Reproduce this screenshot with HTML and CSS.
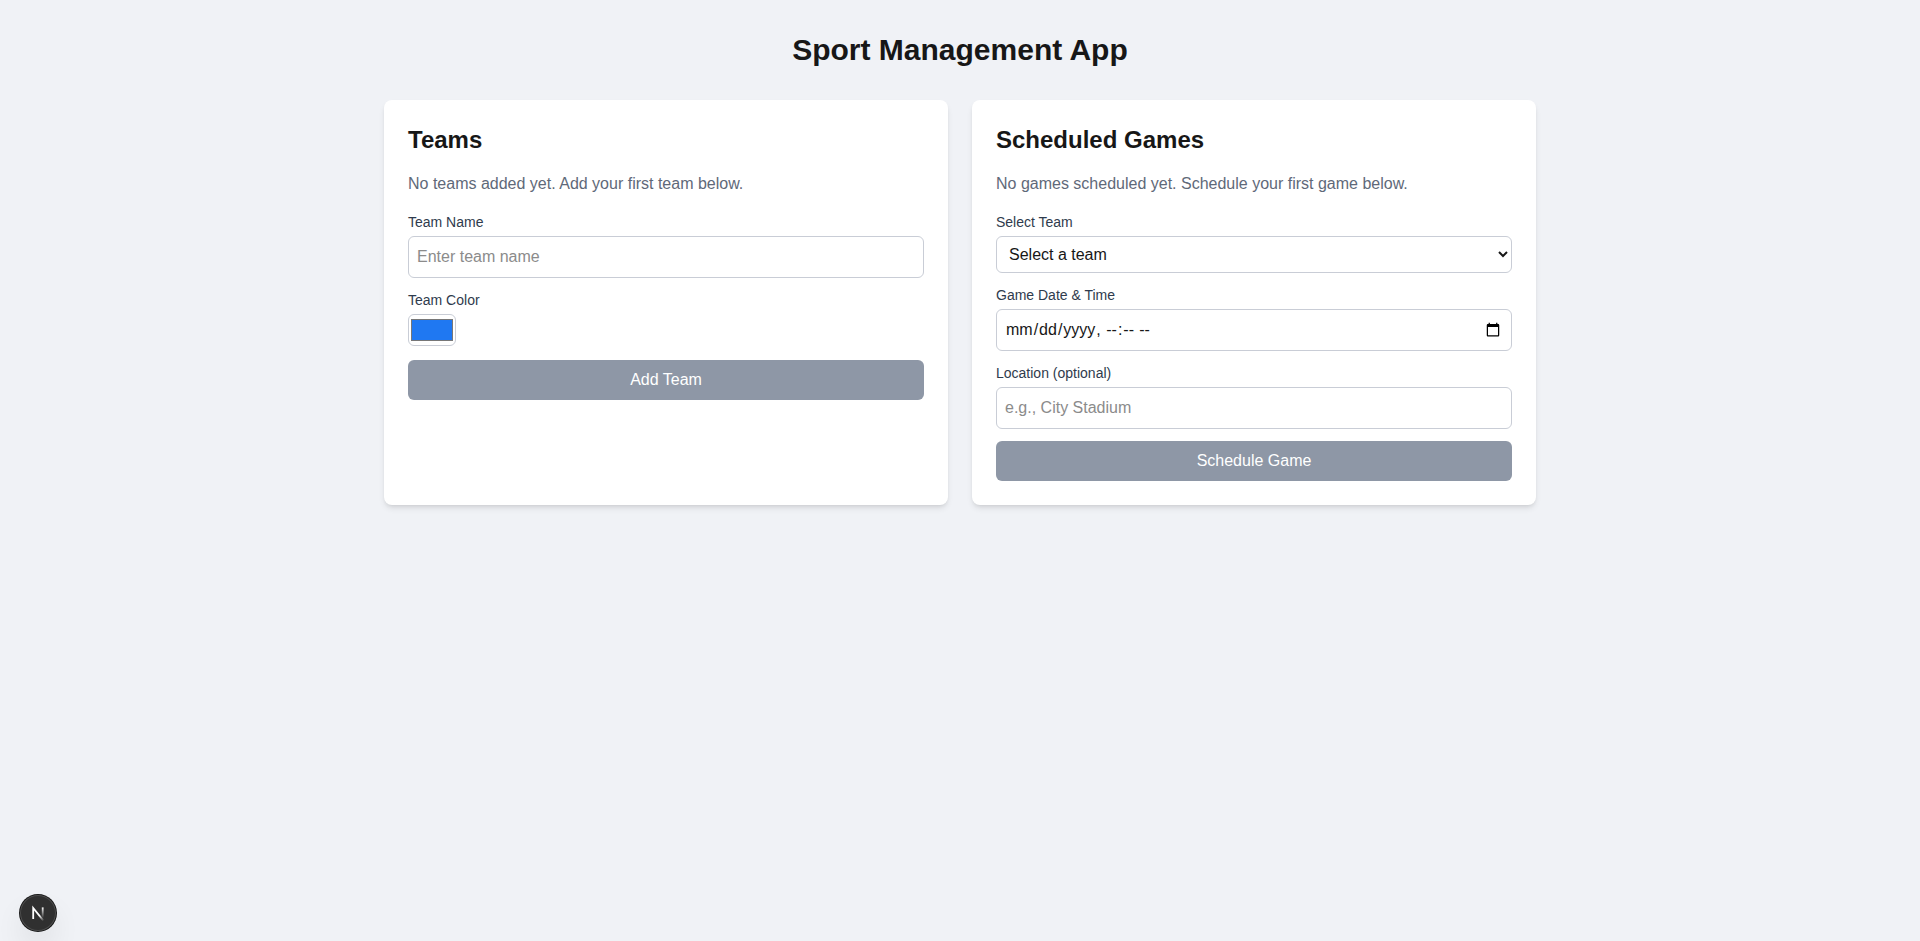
FILE: index.html
```html
<!DOCTYPE html>
<html lang="en">
<head>
<meta charset="utf-8">
<meta name="viewport" content="width=device-width, initial-scale=1">
<title>Sport Management App</title>
<link rel="stylesheet" href="styles.css">
</head>
<body>
<main class="page">
  <h1 class="page-title">Sport Management App</h1>
  <div class="columns">
    <section class="card">
      <h2 class="card-title">Teams</h2>
      <p class="empty">No teams added yet. Add your first team below.</p>
      <form class="form">
        <div>
          <label class="label" for="team-name">Team Name</label>
          <input class="field" id="team-name" type="text" placeholder="Enter team name">
        </div>
        <div class="color-row">
          <label class="label" for="team-color">Team Color</label>
          <input class="swatch" id="team-color" type="color" value="#1f78f2">
        </div>
        <button class="submit" type="submit" disabled>Add Team</button>
      </form>
    </section>
    <section class="card">
      <h2 class="card-title">Scheduled Games</h2>
      <p class="empty">No games scheduled yet. Schedule your first game below.</p>
      <form class="form">
        <div>
          <label class="label" for="game-team">Select Team</label>
          <select class="field select" id="game-team">
            <option>Select a team</option>
          </select>
        </div>
        <div>
          <label class="label" for="game-date">Game Date &amp; Time</label>
          <input class="field" id="game-date" type="datetime-local">
        </div>
        <div>
          <label class="label" for="game-location">Location (optional)</label>
          <input class="field" id="game-location" type="text" placeholder="e.g., City Stadium">
        </div>
        <button class="submit" type="submit" disabled>Schedule Game</button>
      </form>
    </section>
  </div>
</main>
<button class="dev-badge" type="button" aria-label="Open dev tools">
  <svg width="36" height="36" viewBox="0 0 36 36" fill="none" stroke-width="1.8">
    <defs>
      <linearGradient id="diagonal" x1="19.5" y1="20.5" x2="23.5" y2="26" gradientUnits="userSpaceOnUse">
        <stop stop-color="#fff"/>
        <stop offset="1" stop-color="#fff" stop-opacity="0"/>
      </linearGradient>
      <linearGradient id="stem" x1="22" y1="12" x2="22" y2="23" gradientUnits="userSpaceOnUse">
        <stop stop-color="#fff"/>
        <stop offset="1" stop-color="#fff" stop-opacity="0"/>
      </linearGradient>
    </defs>
    <path d="M23.4 25.6L13.2 13V23.9" stroke="url(#diagonal)"/>
    <path d="M22.7 12.4V23.9" stroke="url(#stem)"/>
  </svg>
</button>
</body>
</html>
```
FILE: styles.css
```css
*, *::before, *::after { box-sizing: border-box; }

body {
  margin: 0;
  min-height: 100vh;
  background: #f0f2f6;
  color: #171717;
  font-family: "Liberation Sans", Arial, Helvetica, sans-serif;
  font-size: 16px;
  line-height: 24px;
}

h1, h2, p { margin: 0; }

input, select, button { font: inherit; color: inherit; margin: 0; }

.page {
  max-width: 1216px;
  margin: 0 auto;
  padding: 32px;
}

.page-title {
  margin-bottom: 32px;
  font-size: 30px;
  line-height: 36px;
  font-weight: 700;
  text-align: center;
}

.columns {
  display: grid;
  grid-template-columns: repeat(2, minmax(0, 1fr));
  gap: 24px;
}

.card {
  padding: 24px;
  background: #fff;
  border-radius: 8px;
  box-shadow: 0 4px 6px -1px rgba(0, 0, 0, 0.1), 0 2px 4px -2px rgba(0, 0, 0, 0.1);
}

.card-title {
  margin-bottom: 16px;
  font-size: 24px;
  line-height: 32px;
  font-weight: 700;
}

.empty {
  margin-bottom: 16px;
  color: #5f6979;
}

.form {
  display: flex;
  flex-direction: column;
  gap: 12px;
}

.label {
  display: block;
  margin-bottom: 4px;
  font-size: 14px;
  line-height: 20px;
  color: #2f3b4d;
}

.field {
  display: block;
  width: 100%;
  height: 42px;
  padding: 8px;
  border: 1px solid #c9cdd6;
  border-radius: 6px;
  background: #fff;
}

.field::placeholder { color: #8b8b8b; opacity: 1; }

.select { height: 37px; }

.color-row { padding-bottom: 2px; }

.swatch {
  display: block;
  width: 48px;
  height: 32px;
  padding: 0;
  border: 1px solid #c9cdd6;
  border-radius: 6px;
  background: transparent;
}

.submit {
  height: 40px;
  padding: 8px 16px;
  border: 0;
  border-radius: 6px;
  background: #8e97a6;
  color: #fff;
}

.dev-badge {
  position: fixed;
  left: 20px;
  bottom: 10px;
  width: 36px;
  height: 36px;
  padding: 0;
  border: 0;
  border-radius: 50%;
  background: #303030;
  box-shadow: 0 0 0 1px #171717, inset 0 0 0 1px rgba(255, 255, 255, 0.14), 0 16px 32px -8px rgba(0, 0, 0, 0.24);
}

.dev-badge svg { display: block; }
```
